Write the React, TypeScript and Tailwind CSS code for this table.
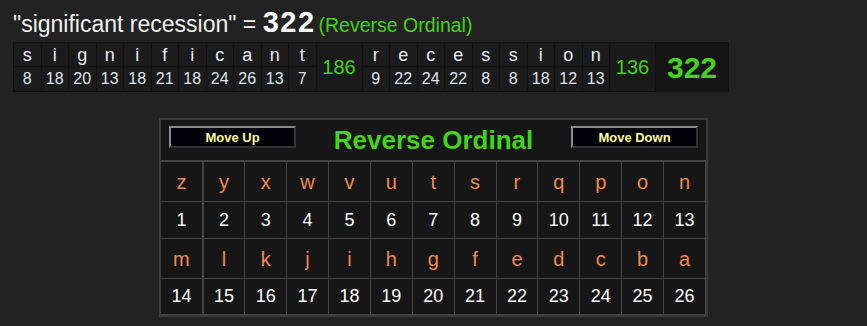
const word1 = [
  ['s', 8], ['i', 18], ['g', 20], ['n', 13], ['i', 18], ['f', 21],
  ['i', 18], ['c', 24], ['a', 26], ['n', 13], ['t', 7],
] as const;

const word2 = [
  ['r', 9], ['e', 22], ['c', 24], ['e', 22], ['s', 8], ['s', 8],
  ['i', 18], ['o', 12], ['n', 13],
] as const;

const rowA = 'zyxwvutsrqpon'.split('');
const rowB = 'mlkjihgfedcba'.split('');

const MoveButton = ({ label }: { label: string }) => (
  <button
    className="
      h-[22px] w-[127px]
      border-2 border-t-[#8a8a8a] border-l-[#8a8a8a] border-r-[#333] border-b-[#333]
      bg-[#000008] text-[13px] font-bold text-[#ffff99]
    "
  >
    {label}
  </button>
);

const App = () => {
  return (
    <div className="min-h-[326px] bg-[#222222] font-['Liberation_Sans',Arial,sans-serif] text-[#eeeeee]">
      <div className="px-[13px] pt-[1px]">
        <div className="flex h-[36px] items-baseline whitespace-nowrap">
          <span className="text-[23px] text-[#f2f2f2]">"significant recession" =&nbsp;</span>
          <span className="text-[29px] font-bold tracking-[1.5px] text-white">322</span>
          <span className="ml-[3px] text-[19.5px] text-[#44d21c]">(Reverse Ordinal)</span>
        </div>

        <table className="mt-[5px] border-collapse bg-[#1b1b1b]">
          <tbody>
            <tr className="h-[24px]">
              {word1.map(([l], i) => (
                <td key={'a' + i} className="w-[27.5px] border border-[#121212] text-center text-[18px] leading-none text-[#e6eef8]">
                  {l}
                </td>
              ))}
              <td rowSpan={2} className="w-[46px] border border-[#121212] bg-[#1a1a1a] text-center text-[20px] text-[#44d21c]">
                186
              </td>
              {word2.map(([l], i) => (
                <td key={'b' + i} className="w-[27.5px] border border-[#121212] text-center text-[18px] leading-none text-[#e6eef8]">
                  {l}
                </td>
              ))}
              <td rowSpan={2} className="w-[46px] border border-[#121212] bg-[#1a1a1a] text-center text-[20px] text-[#44d21c]">
                136
              </td>
              <td rowSpan={2} className="w-[73px] border border-[#121212] bg-[#141414] text-center text-[30px] font-bold text-[#44d21c]">
                322
              </td>
            </tr>
            <tr className="h-[25px]">
              {word1.map(([, n], i) => (
                <td key={'c' + i} className="border border-[#121212] text-center text-[16px] leading-none text-[#dde6f0]">
                  {n}
                </td>
              ))}
              {word2.map(([, n], i) => (
                <td key={'d' + i} className="border border-[#121212] text-center text-[16px] leading-none text-[#dde6f0]">
                  {n}
                </td>
              ))}
            </tr>
          </tbody>
        </table>
      </div>

      <div className="mx-auto mt-[26px] w-[549px] border-2 border-[#3c3c3c] bg-[#161616]">
        <div className="flex h-[41px] items-center justify-between border-b border-[#444] px-[8px] pb-[6px]">
          <MoveButton label="Move Up" />
          <span className="mt-[6px] text-[26px] font-bold text-[#44d21c]">Reverse Ordinal</span>
          <MoveButton label="Move Down" />
        </div>
        <table className="w-full border-collapse">
          <tbody>
            {[rowA, rowB].map((row, r) => (
              <>
                <tr key={'l' + r} className="h-[40px]">
                  {row.map((l, i) => (
                    <td key={i} className="w-[42px] border border-[#444] text-center text-[20px] text-[#ee8a55] first:border-l-0 first:border-r-2">
                      {l}
                    </td>
                  ))}
                </tr>
                <tr key={'n' + r} className={r === 0 ? 'h-[37px]' : 'h-[36px]'}>
                  {row.map((_, i) => (
                    <td key={i} className="border border-[#444] text-center text-[18px] text-white first:border-l-0 first:border-r-2">
                      {r * 13 + i + 1}
                    </td>
                  ))}
                </tr>
              </>
            ))}
          </tbody>
        </table>
      </div>
    </div>
  );
};

export default App;
